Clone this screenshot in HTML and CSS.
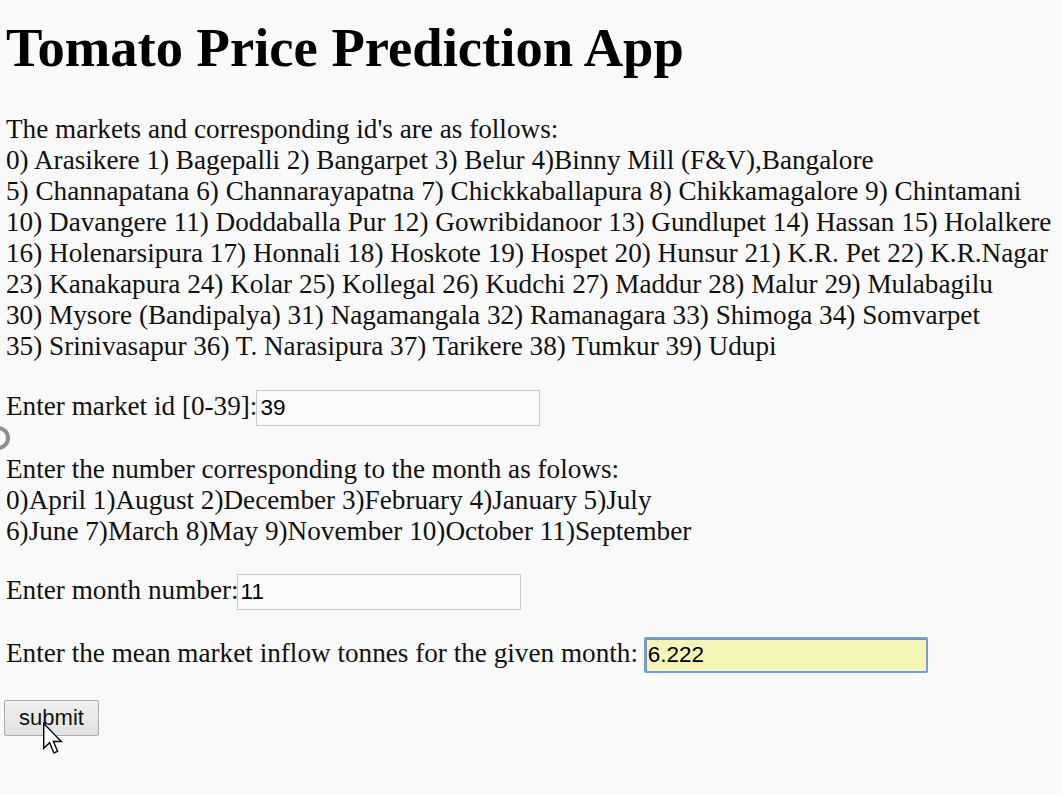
FILE: index.html
```html
<!DOCTYPE html>
<html>
<head>
<meta charset="utf-8">
<title>Tomato Price Prediction App</title>
<link rel="stylesheet" href="styles.css">
</head>
<body>
<div class="page">
  <h1 class="title">Tomato Price Prediction App</h1>
  <p class="text text-loose">The markets and corresponding id's are as follows:<br>0) Arasikere 1) Bagepalli 2) Bangarpet 3) Belur 4)Binny Mill (F&amp;V),Bangalore<br>5) Channapatana 6) Channarayapatna 7) Chickkaballapura 8) Chikkamagalore 9) Chintamani<br>10) Davangere 11) Doddaballa Pur 12) Gowribidanoor 13) Gundlupet 14) Hassan 15) Holalkere<br>16) Holenarsipura 17) Honnali 18) Hoskote 19) Hospet 20) Hunsur 21) K.R. Pet 22) K.R.Nagar<br>23) Kanakapura 24) Kolar 25) Kollegal 26) Kudchi 27) Maddur 28) Malur 29) Mulabagilu<br>30) Mysore (Bandipalya) 31) Nagamangala 32) Ramanagara 33) Shimoga 34) Somvarpet<br>35) Srinivasapur 36) T. Narasipura 37) Tarikere 38) Tumkur 39) Udupi</p>
  <p class="text text-loose">Enter market id [0-39]:<input class="field field-first" type="text" value="39"></p>
  <p class="text">Enter the number corresponding to the month as folows:<br>0)April 1)August 2)December 3)February 4)January 5)July<br>6)June 7)March 8)May 9)November 10)October 11)September</p>
  <p class="text">Enter month number:<input class="field field-second" type="text" value="11"></p>
  <p class="text">Enter the mean market inflow tonnes for the given month: <input class="field field-active" type="text" value="6.222"></p>
  <div class="actions"><button class="submit" type="button">submit</button></div>
</div>
<div class="ring"></div>
<svg class="cursor" width="22" height="34" viewBox="0 0 14 22"><path d="M1 1 L1 17 L4.8 13.4 L7.6 20 L10 19 L7.3 12.6 L12.4 12.6 Z" fill="#fff" stroke="#000" stroke-width="0.9" stroke-linejoin="miter"/></svg>
</body>
</html>
```
FILE: styles.css
```css
html, body {
  margin: 0;
  padding: 0;
  background: #f9f9f9;
}
body {
  position: relative;
  min-height: 795px;
  overflow: hidden;
  font-family: "Liberation Serif", "Times New Roman", serif;
  color: #111;
}
.page {
  padding: 0 0 0 6px;
}
.title {
  font-size: 54.6px;
  font-weight: bold;
  line-height: 62px;
  margin: 17px 0 35px 0;
  color: #000;
}
.text {
  font-size: 27.2px;
  line-height: 31px;
  margin: 0 0 27px 0;
  white-space: nowrap;
}
.text-loose {
  margin-bottom: 28px;
}
.field {
  box-sizing: border-box;
  width: 284px;
  height: 36px;
  margin: 0;
  padding: 0 3px;
  border: 1px solid #c9c9c9;
  background: #fbfbfb;
  font-family: "Liberation Sans", Arial, sans-serif;
  font-size: 22.5px;
  color: #000;
}
.field-first {
  margin-left: -1px;
}
.field-second {
  margin-left: -2px;
}
.field-active {
  margin-left: -1px;
  border: 2px solid #6c9fe6;
  border-radius: 2px;
  background: #f6f5b8;
  box-shadow: inset 1px 1px 0 #8c8c8c;
  outline: none;
  padding-left: 2px;
}
.actions {
  margin: 0;
}
.submit {
  box-sizing: border-box;
  width: 95px;
  height: 36px;
  margin-left: -2px;
  padding: 0;
  border: 1px solid #acacac;
  border-radius: 2px;
  background: linear-gradient(#f0f0f0, #e1e1e1);
  font-family: "Liberation Sans", Arial, sans-serif;
  font-size: 22px;
  color: #111;
}
.ring {
  position: absolute;
  left: -14px;
  top: 426px;
  width: 16px;
  height: 16px;
  border: 4px solid #8d8d8d;
  border-radius: 50%;
}
.cursor {
  position: absolute;
  left: 42px;
  top: 722px;
}
```
